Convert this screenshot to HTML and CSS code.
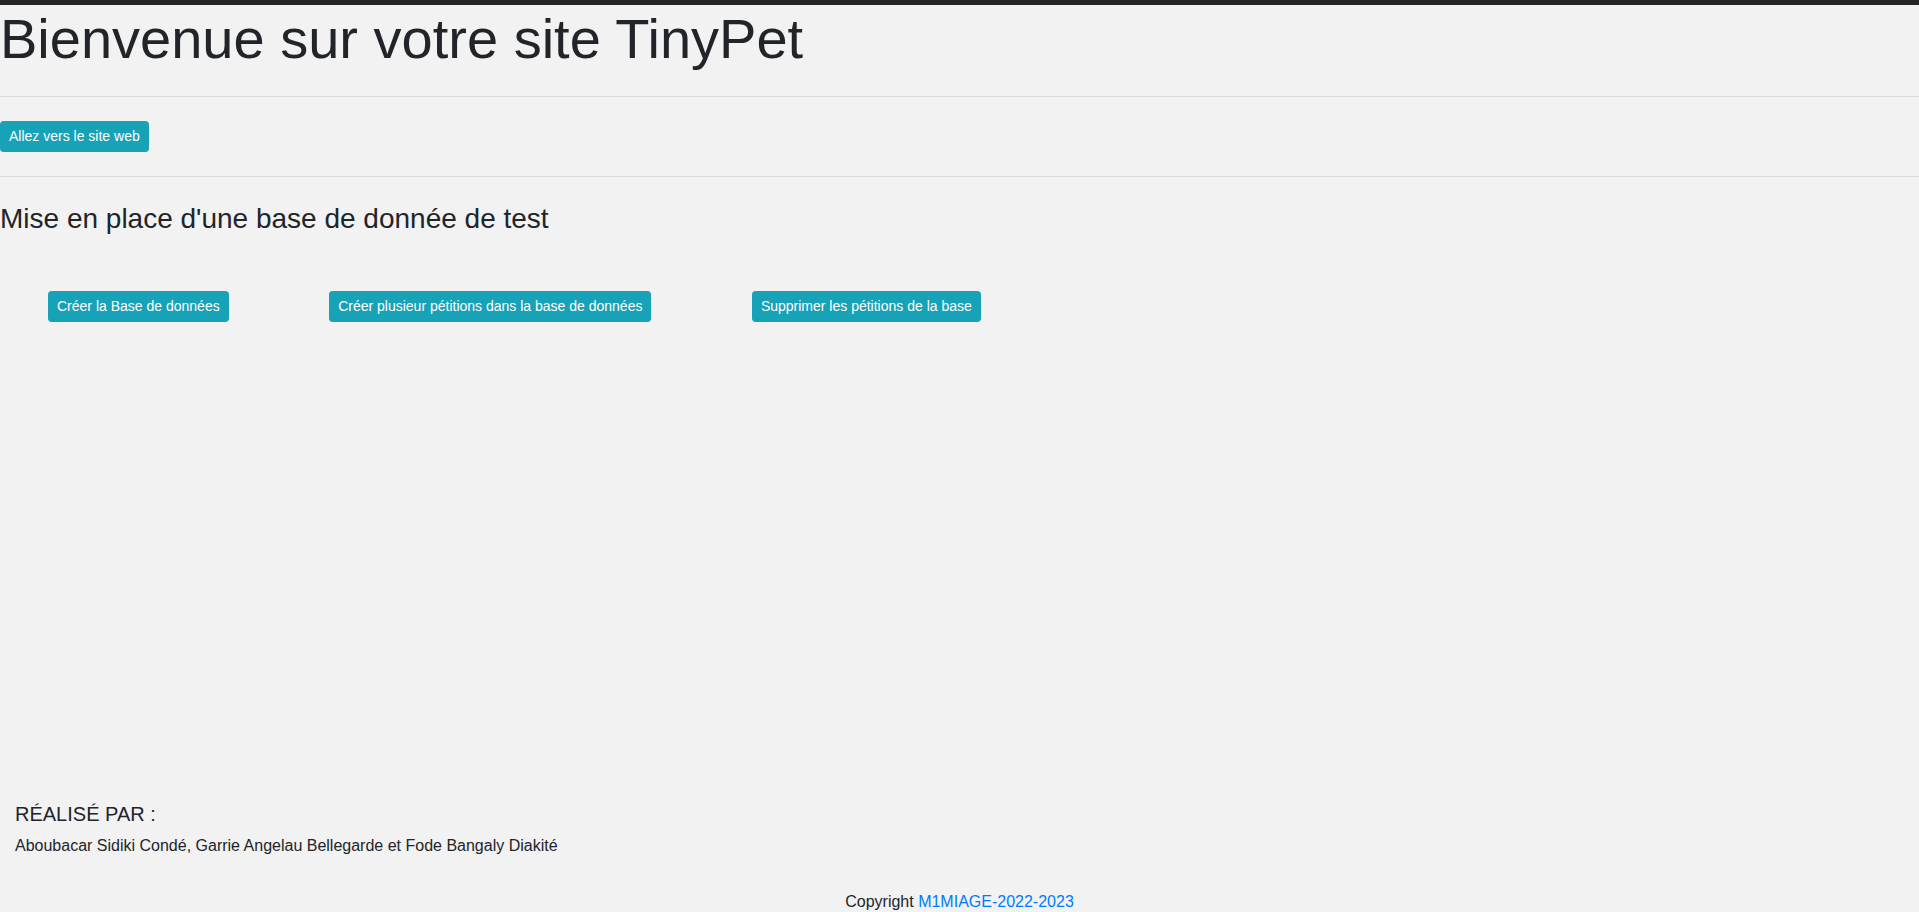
FILE: index.html
```html
<!DOCTYPE html>
<html lang="fr">
<head>
<meta charset="utf-8">
<title>TinyPet</title>
<link rel="stylesheet" href="styles.css">
</head>
<body>
<div class="topbar"></div>
<main class="content">
  <h1 class="title">Bienvenue sur votre site TinyPet</h1>
  <hr class="rule">
  <div class="link-row">
    <a class="btn" href="#">Allez vers le site web</a>
  </div>
  <hr class="rule">
  <h3 class="subtitle">Mise en place d'une base de donnée de test</h3>
  <div class="actions">
    <button class="btn btn-spaced">Créer la Base de données</button>
    <button class="btn btn-spaced">Créer plusieur pétitions dans la base de données</button>
    <button class="btn btn-spaced">Supprimer les pétitions de la base</button>
  </div>
</main>
<footer class="footer">
  <div class="authors">
    <h5 class="authors-title">RÉALISÉ PAR :</h5>
    <p class="authors-names">Aboubacar Sidiki Condé, Garrie Angelau Bellegarde et Fode Bangaly Diakité</p>
  </div>
  <div class="copyright">Copyright <a href="#" class="copy-link">M1MIAGE-2022-2023</a></div>
</footer>
</body>
</html>
```
FILE: styles.css
```css
* { box-sizing: border-box; }
html, body { margin: 0; padding: 0; }
body {
  background: #f2f2f2;
  color: #212529;
  font-family: "Liberation Sans", Arial, sans-serif;
  font-size: 16px;
  line-height: 1.5;
}
.topbar {
  height: 5px;
  background: #252525;
}
.content {
  min-height: 797px;
}
.title {
  margin: 0;
  padding-bottom: 8px;
  font-size: 56px;
  font-weight: 400;
  line-height: 1.2;
}
.rule {
  margin: 16px 0;
  border: 0;
  border-top: 1px solid rgba(0, 0, 0, 0.1);
}
.link-row {
  padding: 8px 0;
}
.btn {
  display: inline-block;
  font-family: "Liberation Sans", Arial, sans-serif;
  font-size: 14px;
  line-height: 1.5;
  padding: 4px 8px;
  color: #fff;
  background: #17a2b8;
  border: 1px solid #17a2b8;
  border-radius: 3.2px;
  text-decoration: none;
  cursor: pointer;
  vertical-align: middle;
}
.subtitle {
  margin: 0 0 8px 0;
  padding-top: 8.5px;
  font-size: 28px;
  font-weight: 400;
  line-height: 1.2;
}
.btn-spaced {
  margin: 48px;
}
.actions {
  font-size: 16px;
}
.footer {
  padding: 0 15px;
}
.authors-title {
  margin: 0 0 8px 0;
  font-size: 20px;
  font-weight: 400;
  line-height: 1.2;
}
.authors-names {
  margin: 0 0 16px 0;
}
.copyright {
  text-align: center;
  margin: 0 -15px;
  padding-top: 16px;
}
.copy-link {
  color: #007bff;
  text-decoration: none;
}
```
